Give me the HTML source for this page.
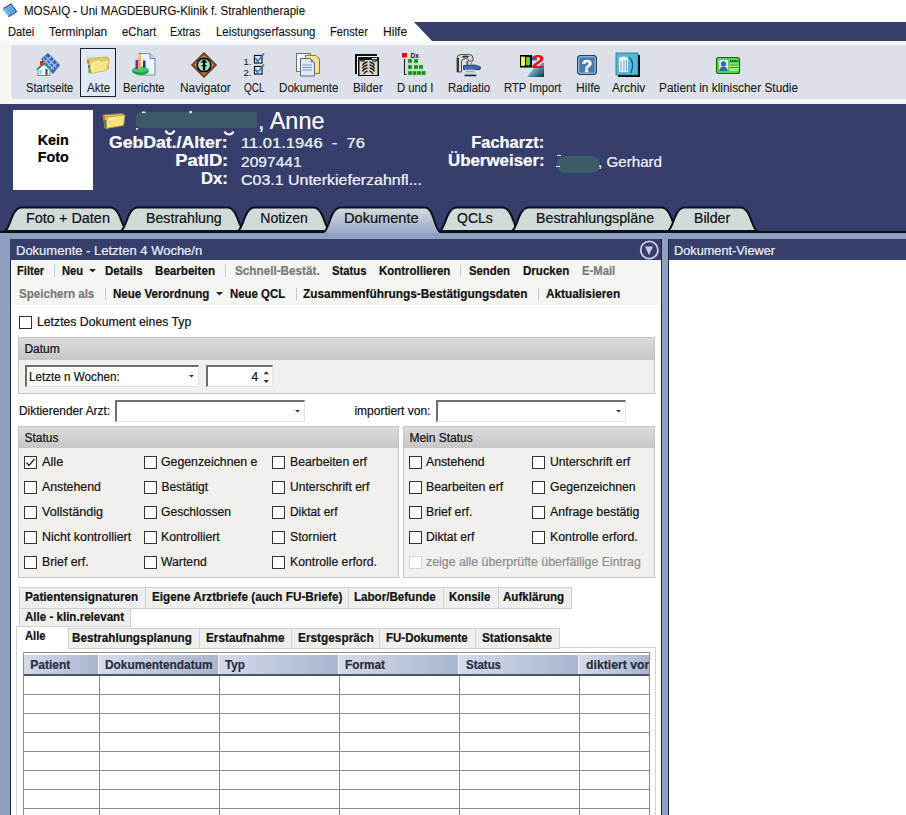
<!DOCTYPE html>
<html><head><meta charset="utf-8"><style>

html,body{margin:0;padding:0;}
body{width:906px;height:815px;overflow:hidden;position:relative;background:#fff;font-family:'Liberation Sans',sans-serif;}
body>div{position:absolute;}
.t{white-space:pre;-webkit-text-stroke:0.2px currentColor;}
svg{position:absolute;}

</style></head><body>
<svg style="left:0;top:0" width="20" height="20" viewBox="0 0 20 20"><polygon points="11,4 16.5,11.5 8.5,16.8 2.5,9.2" fill="#78c4ea"/><polyline points="3.5,8.5 11,4 16.5,11.5 8.5,16.8" fill="none" stroke="#3050a0" stroke-width="1.3"/><path d="M5,10.5 L11,6.5 M6.5,12.5 L12.5,8.5 M8,14.5 L14,10.5 M7,7.5 L11.5,14 M9.5,6 L14,12.5" stroke="#4a8ac8" stroke-width="0.8"/></svg>
<div class="t" style="left:23.70px;top:4.74px;font-size:12px;line-height:12px;color:#101010;transform:scaleX(0.960);transform-origin:left center;-webkit-text-stroke:0.1px currentColor;">MOSAIQ - Uni MAGDEBURG-Klinik f. Strahlentherapie</div>
<div class="t" style="left:7.50px;top:25.74px;font-size:12px;line-height:12px;color:#101010;transform:scaleX(0.935);transform-origin:left center;-webkit-text-stroke:0.1px currentColor;">Datei</div>
<div class="t" style="left:48.60px;top:25.74px;font-size:12px;line-height:12px;color:#101010;transform:scaleX(0.990);transform-origin:left center;-webkit-text-stroke:0.1px currentColor;">Terminplan</div>
<div class="t" style="left:121.70px;top:25.74px;font-size:12px;line-height:12px;color:#101010;transform:scaleX(0.949);transform-origin:left center;-webkit-text-stroke:0.1px currentColor;">eChart</div>
<div class="t" style="left:170.40px;top:25.74px;font-size:12px;line-height:12px;color:#101010;transform:scaleX(0.894);transform-origin:left center;-webkit-text-stroke:0.1px currentColor;">Extras</div>
<div class="t" style="left:215.70px;top:25.74px;font-size:12px;line-height:12px;color:#101010;transform:scaleX(0.955);transform-origin:left center;-webkit-text-stroke:0.1px currentColor;">Leistungserfassung</div>
<div class="t" style="left:330.30px;top:25.74px;font-size:12px;line-height:12px;color:#101010;transform:scaleX(0.931);transform-origin:left center;-webkit-text-stroke:0.1px currentColor;">Fenster</div>
<div class="t" style="left:382.60px;top:25.74px;font-size:12px;line-height:12px;color:#101010;transform:scaleX(1.008);transform-origin:left center;-webkit-text-stroke:0.1px currentColor;">Hilfe</div>
<svg style="left:0;top:0" width="906" height="45"><polygon points="414,22 906,22 906,41 432,41" fill="#363f6b"/></svg>
<div style="left:0px;top:41px;width:906px;height:63px;background:#f6f6f7;"></div>
<div style="left:11px;top:45px;width:895px;height:54px;background:#dce0e8;border-radius:3px 0 0 3px;"></div>
<div style="left:80px;top:48px;width:34px;height:47px;background:#dfe8f3;border:1px solid #1c2030;"></div>
<div class="t" style="left:25.50px;top:81.94px;font-size:12px;line-height:12px;color:#1a1a1a;transform:scaleX(0.933);transform-origin:left center;-webkit-text-stroke:0.1px currentColor;">Startseite</div>
<div class="t" style="left:86.80px;top:81.94px;font-size:12px;line-height:12px;color:#1a1a1a;transform:scaleX(0.966);transform-origin:left center;-webkit-text-stroke:0.1px currentColor;">Akte</div>
<div class="t" style="left:122.90px;top:81.94px;font-size:12px;line-height:12px;color:#1a1a1a;transform:scaleX(0.947);transform-origin:left center;-webkit-text-stroke:0.1px currentColor;">Berichte</div>
<div class="t" style="left:179.50px;top:81.94px;font-size:12px;line-height:12px;color:#1a1a1a;transform:scaleX(0.987);transform-origin:left center;-webkit-text-stroke:0.1px currentColor;">Navigator</div>
<div class="t" style="left:243.50px;top:81.94px;font-size:12px;line-height:12px;color:#1a1a1a;transform:scaleX(0.830);transform-origin:left center;-webkit-text-stroke:0.1px currentColor;">QCL</div>
<div class="t" style="left:279.00px;top:81.94px;font-size:12px;line-height:12px;color:#1a1a1a;transform:scaleX(0.969);transform-origin:left center;-webkit-text-stroke:0.1px currentColor;">Dokumente</div>
<div class="t" style="left:352.50px;top:81.94px;font-size:12px;line-height:12px;color:#1a1a1a;transform:scaleX(0.971);transform-origin:left center;-webkit-text-stroke:0.1px currentColor;">Bilder</div>
<div class="t" style="left:397.00px;top:81.94px;font-size:12px;line-height:12px;color:#1a1a1a;transform:scaleX(0.938);transform-origin:left center;-webkit-text-stroke:0.1px currentColor;">D und I</div>
<div class="t" style="left:447.50px;top:81.94px;font-size:12px;line-height:12px;color:#1a1a1a;transform:scaleX(0.958);transform-origin:left center;-webkit-text-stroke:0.1px currentColor;">Radiatio</div>
<div class="t" style="left:503.60px;top:81.94px;font-size:12px;line-height:12px;color:#1a1a1a;transform:scaleX(0.939);transform-origin:left center;-webkit-text-stroke:0.1px currentColor;">RTP Import</div>
<div class="t" style="left:575.70px;top:81.94px;font-size:12px;line-height:12px;color:#1a1a1a;transform:scaleX(1.012);transform-origin:left center;-webkit-text-stroke:0.1px currentColor;">Hilfe</div>
<div class="t" style="left:612.00px;top:81.94px;font-size:12px;line-height:12px;color:#1a1a1a;-webkit-text-stroke:0.1px currentColor;">Archiv</div>
<div class="t" style="left:659.10px;top:81.94px;font-size:12px;line-height:12px;color:#1a1a1a;transform:scaleX(0.988);transform-origin:left center;-webkit-text-stroke:0.1px currentColor;">Patient in klinischer Studie</div>
<svg style="left:0;top:0" width="906" height="104"><g transform="translate(32,48)"><polygon points="9,11 16,5 28,17 21,26" fill="#3a62b0"/><path d="M11,10.5 L22,21.5 M13.5,8.5 L24.5,19.5 M12.5,15 L19,8.5 M15.5,18 L22,11.5 M18.5,21.5 L25,15" stroke="#9cc4ee" stroke-width="1.2"/><polygon points="4,21 12,14 19,21 17,22 12,17 6,22" fill="#20b040"/><rect x="8" y="13" width="3.5" height="4" fill="#d03018"/><polygon points="6,21.5 12,16.5 18,21.5 18,27.5 6,27.5" fill="#f4f8ff" stroke="#5a70a8" stroke-width="0.9"/><rect x="13.5" y="21" width="2" height="6" fill="#40486a"/><rect x="7.5" y="22" width="2.5" height="4" fill="#a8c8f0"/></g><g transform="translate(82,48)"><polygon points="5.5,10.5 26,9 26.5,20.5 8,25" fill="#e8cc58" stroke="#c0a040" stroke-width="0.7"/><polygon points="9.5,14.5 27.5,11.5 24.5,22.5 8.5,25.5" fill="#f6e68a" stroke="#c8a848" stroke-width="0.7"/><path d="M10,15 L18,13 M10,15 L9.5,23" stroke="#fffbe8" stroke-width="1.1" fill="none"/><rect x="5" y="12" width="2.2" height="3.5" fill="#e07828"/><rect x="6" y="17" width="2" height="3.5" fill="#7868b0"/><rect x="6.5" y="21.5" width="2.2" height="3.5" fill="#38a838"/></g><g transform="translate(127,48)"><path d="M11.5,5.5 L23,5.5 L28,10.5 L28,27 L11.5,27 Z" fill="#eef4fc" stroke="#7888a8" stroke-width="1"/><path d="M23,5.5 L23,10.5 L28,10.5" fill="#c8d8ee" stroke="#7888a8" stroke-width="1"/><ellipse cx="13.5" cy="23" rx="8.5" ry="4" fill="#18a040"/><ellipse cx="13.5" cy="21.5" rx="8" ry="3" fill="#40c868"/><rect x="8.5" y="12" width="2.5" height="9" fill="#7030a0"/><rect x="11" y="6" width="2.8" height="15" fill="#f0a060"/><rect x="11" y="6" width="1.5" height="4" fill="#f0e080"/><rect x="16" y="12.5" width="2.5" height="7" fill="#203090"/></g><g transform="translate(188,48)"><polygon points="16,4.5 28.5,17 16,29.5 3.5,17" fill="#8a4a20" stroke="#402010" stroke-width="1" stroke-linejoin="round"/><polygon points="16,7 26,17 16,27 6,17" fill="#d08a50"/><circle cx="16" cy="17" r="7.6" fill="#000"/><circle cx="16" cy="17" r="6" fill="#98e8c0"/><polygon points="16,11 19.5,14.5 12.5,14.5" fill="#000"/><rect x="15" y="13.5" width="2.2" height="9" fill="#000"/><rect x="13.5" y="17" width="5" height="1.3" fill="#000"/></g><g transform="translate(238,48)"><text x="5.5" y="16.5" font-family="Liberation Sans" font-size="9.5" fill="#111">1.</text><text x="5.5" y="27.5" font-family="Liberation Sans" font-size="9.5" fill="#111">2.</text><rect x="16.5" y="7.5" width="7.5" height="7.5" fill="#f0f6ff" stroke="#111" stroke-width="1.2"/><rect x="16.5" y="18.5" width="7.5" height="7.5" fill="#f0f6ff" stroke="#111" stroke-width="1.2"/><polyline points="17.5,10 19.5,13.5 26,5.5" fill="none" stroke="#3a7ab0" stroke-width="1.8"/><polyline points="17.5,21 19.5,24.5 26,16.5" fill="none" stroke="#3a7ab0" stroke-width="1.8"/></g><g transform="translate(292,48)"><rect x="4.5" y="5.5" width="14" height="18" fill="#f8f8ff" stroke="#6a7088" stroke-width="1"/><path d="M13.5,7.5 L24,7.5 L27.5,11 L27.5,25.5 L13.5,25.5 Z" fill="#f8e490" stroke="#a07020" stroke-width="1"/><path d="M8.5,10.5 L18.5,10.5 L22.5,14.5 L22.5,28 L8.5,28 Z" fill="#dcecfc" stroke="#5a6890" stroke-width="1"/><path d="M18.5,10.5 L18.5,14.5 L22.5,14.5 Z" fill="#7090d0"/><path d="M10.5,17 H20 M10.5,19.5 H20 M10.5,22 H20" stroke="#6a8ad0" stroke-width="0.9"/></g><g transform="translate(350,48)"><rect x="5" y="6" width="22" height="20" fill="#111"/><rect x="7" y="8" width="22" height="20" fill="#fff"/><rect x="8" y="9" width="21" height="19" fill="#111"/><rect x="9.5" y="12" width="18" height="15" fill="#d8d4c6"/><path d="M10,12 Q13,14 15,12.5 M22,12.5 Q25,14 27.5,12" stroke="#222" stroke-width="1.2" fill="none"/><path d="M17.5,14 Q14,14.5 12.5,17.5 M17.5,17 Q14,17.5 12.5,20.5 M17.5,20 Q14,20.5 12.5,23.5 M17.5,23 Q15,23.5 14,26" stroke="#1a1a1a" stroke-width="1.3" fill="none"/><path d="M19.5,14 Q23,14.5 24.5,17.5 M19.5,17 Q23,17.5 24.5,20.5 M19.5,20 Q23,20.5 24.5,23.5 M19.5,23 Q22,23.5 23,26" stroke="#1a1a1a" stroke-width="1.3" fill="none"/><rect x="22" y="10" width="5" height="1.2" fill="#fff"/></g><g transform="translate(398,48)"><rect x="4" y="5" width="5" height="4.5" fill="#e01010"/><text x="12.5" y="10" font-family="Liberation Sans" font-size="6.5" font-weight="bold" fill="#111">Dx</text><path d="M6.5,11 V26.5 H8.5" fill="none" stroke="#203020" stroke-width="1.2"/><rect x="10" y="11" width="4" height="4" fill="#108a18" stroke="#80e080" stroke-width="0.5"/><rect x="16" y="11" width="4" height="4" fill="#108a18" stroke="#80e080" stroke-width="0.5"/><rect x="10" y="17" width="4" height="4" fill="#108a18" stroke="#80e080" stroke-width="0.5"/><rect x="16" y="17" width="4" height="4" fill="#108a18" stroke="#80e080" stroke-width="0.5"/><rect x="21" y="17" width="4" height="4" fill="#108a18" stroke="#80e080" stroke-width="0.5"/><rect x="10" y="23" width="4" height="4" fill="#108a18" stroke="#80e080" stroke-width="0.5"/><rect x="14.5" y="23" width="4" height="4" fill="#108a18" stroke="#80e080" stroke-width="0.5"/><rect x="19" y="23" width="4" height="4" fill="#108a18" stroke="#80e080" stroke-width="0.5"/><rect x="23.5" y="23" width="4" height="4" fill="#108a18" stroke="#80e080" stroke-width="0.5"/></g><g transform="translate(452,48)"><path d="M5,24 L5,10 Q5,6.5 9,6.5 L17,6.5 Q21,6.5 21,10 L21,13 L17,13 Q16.5,10.5 13,10.5 Q9.5,10.5 9.5,14 L9.5,24 Z" fill="#d8d4d0" stroke="#505050" stroke-width="1"/><rect x="5" y="10" width="2" height="14" fill="#3a3a3a"/><path d="M10.5,9 Q13.5,7.8 16.5,9" stroke="#303030" stroke-width="1.6" fill="none"/><rect x="14.5" y="13" width="1.8" height="5" fill="#904848"/><rect x="18.5" y="12" width="1.5" height="5" fill="#a0a0a0"/><path d="M11.5,17.5 L23,17 L28.5,19 L28,21.5 L11.5,21.5 Z" fill="#3a6ab8" stroke="#142850" stroke-width="0.8"/><rect x="13" y="21.5" width="10" height="5.5" fill="#c0d4dc"/><path d="M12.5,27.5 H24.5" stroke="#142850" stroke-width="1.6"/><path d="M13.5,23.5 H22" stroke="#c8b060" stroke-width="1"/></g><g transform="translate(516,48)"><defs><linearGradient id="rtpg" x1="0" y1="0" x2="1" y2="1"><stop offset="0" stop-color="#c8f0fa"/><stop offset="0.45" stop-color="#6ab0d8"/><stop offset="1" stop-color="#182848"/></linearGradient></defs><polygon points="11,29 28,29 28,14 18,20" fill="url(#rtpg)"/><rect x="4" y="7" width="12" height="12.5" fill="#000"/><rect x="5" y="8.5" width="4" height="9.5" rx="1" fill="#f0f060"/><rect x="10" y="9" width="4" height="8.5" rx="1" fill="#50d850"/><rect x="16" y="8.5" width="5" height="4" fill="#4060c0"/><text x="0" y="0" transform="translate(15.5,19.5) scale(1.25,1)" font-family="Liberation Sans" font-size="19" font-weight="bold" fill="#e81010">2</text></g><g transform="translate(572,48)"><rect x="5.5" y="7.5" width="19" height="19" rx="2.5" fill="#4a78a8" stroke="#2a4060" stroke-width="1"/><rect x="6.8" y="8.8" width="16.4" height="16.4" rx="1.8" fill="none" stroke="#c0dcf0" stroke-width="0.8"/><text x="15" y="23.5" text-anchor="middle" font-family="Liberation Sans" font-size="17" font-weight="bold" fill="#fff" stroke="#fff" stroke-width="0.5">?</text></g><g transform="translate(612,48)"><rect x="6" y="7" width="22" height="22" fill="#000"/><rect x="4" y="5" width="22" height="22" fill="#58b8d8"/><rect x="4" y="5" width="22" height="22" fill="none" stroke="#306888" stroke-width="0.8"/><path d="M7,10 Q12,7 16,10 L16,24 L7,24 Z" fill="#e8f4fa"/><path d="M9,13 V23 M12,12 V23 M14.5,12 V23" stroke="#7aa0b0" stroke-width="1"/><path d="M17,9 Q23,14 19,25" fill="none" stroke="#205070" stroke-width="1.2"/></g><g transform="translate(712,48)"><rect x="4.5" y="9.5" width="23" height="16" rx="2" fill="#58d058" stroke="#107010" stroke-width="1.2"/><rect x="7" y="12" width="9" height="11" fill="#d8f0f8"/><circle cx="11.5" cy="15.8" r="2.6" fill="#3a68b0"/><path d="M7.2,23 Q7.5,18.5 11.5,18.5 Q15.5,18.5 15.8,23 Z" fill="#3a68b0"/><path d="M18,13 H26" stroke="#111" stroke-width="1.6" stroke-dasharray="1.3,0.9"/><rect x="17.5" y="15.5" width="9" height="7.5" fill="#a8f070"/><path d="M18,17 H26 M18,19.5 H26" stroke="#208020" stroke-width="0.8"/></g></svg>
<div style="left:0px;top:104px;width:906px;height:135px;background:#363f6b;"></div>
<div style="left:13px;top:110px;width:80px;height:80px;background:#fff;"></div>
<div class="t" style="left:37.83px;top:132.65px;font-size:14px;line-height:14px;color:#000;font-weight:bold;transform:scaleX(1.022);transform-origin:center center;">Kein</div>
<div class="t" style="left:37.84px;top:149.85px;font-size:14px;line-height:14px;color:#000;font-weight:bold;transform:scaleX(1.022);transform-origin:center center;">Foto</div>
<div style="left:135.8px;top:112.2px;width:121px;height:16px;background:#3b5b69;border-radius:5px 2px 2px 5px;"></div>
<svg style="left:130px;top:108px" width="140" height="30"><path d="M35.5,22.5 Q37,26 40,26 Q43,26 44.5,22.5" fill="none" stroke="#fff" stroke-width="2"/><path d="M94.5,23.5 Q96,26.5 99,26.5 Q102,26.5 103.5,23.5" fill="none" stroke="#fff" stroke-width="2"/><rect x="12" y="3.6" width="3.5" height="1.4" fill="#fff"/><rect x="59.5" y="3" width="2.2" height="2.2" fill="#fff"/><rect x="6" y="20" width="2" height="1.6" fill="#fff"/></svg>
<svg style="left:101px;top:112px" width="26" height="18" viewBox="0 0 26 18"><polygon points="2,3 22,1.5 23,12 4,16" fill="#e0c050" stroke="#a88a30" stroke-width="0.8"/><polygon points="6,5 24,3 22.5,13.5 5,16.5" fill="#f6e27a" stroke="#b89a38" stroke-width="0.8"/><path d="M7,8 L14,5.5" stroke="#fff8d8" stroke-width="1.2"/><rect x="2" y="4" width="2" height="4" fill="#e07020"/><rect x="3" y="8" width="2" height="4" fill="#7060a0"/><rect x="3.5" y="12" width="2" height="4" fill="#30a030"/></svg>
<div class="t" style="left:257.50px;top:109.83px;font-size:23px;line-height:23px;color:#fff;transform:scaleX(1.019);transform-origin:left center;">, Anne</div>
<div class="t" style="left:120.42px;top:134.96px;font-size:16px;line-height:16px;color:#fff;font-weight:bold;transform:scaleX(1.103);transform-origin:right center;">GebDat./Alter:</div>
<div class="t" style="left:181.77px;top:152.76px;font-size:16px;line-height:16px;color:#fff;font-weight:bold;transform:scaleX(1.146);transform-origin:right center;">PatID:</div>
<div class="t" style="left:202.22px;top:171.36px;font-size:16px;line-height:16px;color:#fff;font-weight:bold;transform:scaleX(1.040);transform-origin:right center;">Dx:</div>
<div class="t" style="left:241.00px;top:136.25px;font-size:14px;line-height:14px;color:#f4f4f8;transform:scaleX(1.183);transform-origin:left center;">11.01.1946  -  76</div>
<div class="t" style="left:241.00px;top:154.55px;font-size:14px;line-height:14px;color:#f4f4f8;transform:scaleX(1.113);transform-origin:left center;">2097441</div>
<div class="t" style="left:241.00px;top:173.35px;font-size:14px;line-height:14px;color:#f4f4f8;transform:scaleX(1.140);transform-origin:left center;">C03.1 Unterkieferzahnfl...</div>
<div class="t" style="left:473.48px;top:134.76px;font-size:16px;line-height:16px;color:#fff;font-weight:bold;transform:scaleX(1.024);transform-origin:right center;">Facharzt:</div>
<div class="t" style="left:453.01px;top:153.36px;font-size:16px;line-height:16px;color:#fff;font-weight:bold;transform:scaleX(1.055);transform-origin:right center;">Überweiser:</div>
<div style="left:556.7px;top:155.9px;width:43px;height:17.3px;background:#3b5b69;border-radius:8px;"></div>
<div style="left:557px;top:155px;width:4px;height:1.4px;background:#fff;"></div>
<div style="left:556px;top:166px;width:4px;height:1.4px;background:#fff;"></div>
<div class="t" style="left:598.40px;top:154.30px;font-size:15px;line-height:15px;color:#f4f4f8;transform:scaleX(1.011);transform-origin:left center;">, Gerhard</div>
<div style="left:0px;top:231px;width:906px;height:2px;background:#0d0f1a;"></div>
<div style="left:0px;top:233px;width:906px;height:6px;background:#90a0c0;"></div>
<svg style="left:0;top:200px" width="906" height="40" viewBox="0 200 906 40"><defs><linearGradient id="ga" x1="0" y1="0" x2="0" y2="1"><stop offset="0" stop-color="#d2dcdc"/><stop offset="1" stop-color="#9aaac8"/></linearGradient></defs><path d="M5,231 C11,227 11,209 21,207.5 L111,207.5 C121,209 121,227 127,231 Z" fill="#cfdad9" stroke="#0d0f1a" stroke-width="2"/><path d="M121,231 C127,227 127,209 137,207.5 L228,207.5 C238,209 238,227 244,231 Z" fill="#cfdad9" stroke="#0d0f1a" stroke-width="2"/><path d="M238,231 C244,227 244,209 254,207.5 L314,207.5 C324,209 324,227 330,231 Z" fill="#cfdad9" stroke="#0d0f1a" stroke-width="2"/><path d="M440,231 C446,227 446,209 456,207.5 L503,207.5 C513,209 513,227 519,231 Z" fill="#cfdad9" stroke="#0d0f1a" stroke-width="2"/><path d="M512,231 C518,227 518,209 528,207.5 L662,207.5 C672,209 672,227 678,231 Z" fill="#cfdad9" stroke="#0d0f1a" stroke-width="2"/><path d="M668,231 C674,227 674,209 684,207.5 L741,207.5 C751,209 751,227 757,231 Z" fill="#cfdad9" stroke="#0d0f1a" stroke-width="2"/><path d="M324,233 C330,229 330,209 340,207.5 L426,207.5 C434,209 434,229 440,233 Z" fill="url(#ga)" stroke="none"/><path d="M324,232 C330,228 330,209 340,207.5 L426,207.5 C434,209 434,228 440,232" fill="none" stroke="#0d0f1a" stroke-width="2"/></svg>
<div class="t" style="left:25.60px;top:210.85px;font-size:14px;line-height:14px;color:#111;transform:scaleX(1.032);transform-origin:left center;">Foto + Daten</div>
<div class="t" style="left:145.60px;top:210.85px;font-size:14px;line-height:14px;color:#111;transform:scaleX(1.013);transform-origin:left center;">Bestrahlung</div>
<div class="t" style="left:260.30px;top:210.85px;font-size:14px;line-height:14px;color:#111;">Notizen</div>
<div class="t" style="left:457.00px;top:210.85px;font-size:14px;line-height:14px;color:#111;">QCLs</div>
<div class="t" style="left:535.50px;top:210.85px;font-size:14px;line-height:14px;color:#111;transform:scaleX(1.018);transform-origin:left center;">Bestrahlungspläne</div>
<div class="t" style="left:694.00px;top:210.85px;font-size:14px;line-height:14px;color:#111;transform:scaleX(1.011);transform-origin:left center;">Bilder</div>
<div class="t" style="left:344.40px;top:210.85px;font-size:14px;line-height:14px;color:#111;transform:scaleX(1.043);transform-origin:left center;">Dokumente</div>
<div style="left:0px;top:239px;width:906px;height:576px;background:#90a0c0;"></div>
<div style="left:10px;top:239px;width:652px;height:576px;background:#1c2342;"></div>
<div style="left:10px;top:239px;width:651px;height:21px;background:#363f6b;border-radius:0 3px 0 0;"></div>
<div style="left:11px;top:260px;width:650px;height:555px;background:#fff;"></div>
<div class="t" style="left:16.00px;top:243.90px;font-size:13px;line-height:13px;color:#f0f0f8;">Dokumente - Letzten 4 Woche/n</div>
<svg style="left:638px;top:240px" width="22" height="21" viewBox="0 0 22 21"><circle cx="11.3" cy="10" r="8.6" fill="none" stroke="#c9cde3" stroke-width="1.8"/><polygon points="7,6.6 15,6.6 11,15.2" fill="#c9cde3"/></svg>
<div style="left:668px;top:239px;width:238px;height:576px;background:#1c2342;"></div>
<div style="left:669px;top:239px;width:237px;height:21px;background:#363f6b;"></div>
<div style="left:669px;top:260px;width:237px;height:555px;background:#fff;"></div>
<div class="t" style="left:674.00px;top:243.90px;font-size:13px;line-height:13px;color:#f0f0f8;transform:scaleX(0.980);transform-origin:left center;">Dokument-Viewer</div>
<div style="left:11px;top:260px;width:648px;height:44.5px;background:#f5f5f3;"></div>
<div class="t" style="left:17.30px;top:264.64px;font-size:12px;line-height:12px;color:#111;font-weight:bold;transform:scaleX(0.927);transform-origin:left center;">Filter</div>
<div style="left:54px;top:265px;width:1px;height:12px;background:#c8c8c8;"></div>
<div class="t" style="left:62.20px;top:264.64px;font-size:12px;line-height:12px;color:#111;font-weight:bold;transform:scaleX(0.931);transform-origin:left center;">Neu</div>
<svg style="left:88.5px;top:268.5px" width="7" height="4"><polygon points="0,0 7,0 3.5,3.5" fill="#222"/></svg>
<div class="t" style="left:104.70px;top:264.64px;font-size:12px;line-height:12px;color:#111;font-weight:bold;transform:scaleX(0.955);transform-origin:left center;">Details</div>
<div class="t" style="left:155.20px;top:264.64px;font-size:12px;line-height:12px;color:#111;font-weight:bold;transform:scaleX(0.967);transform-origin:left center;">Bearbeiten</div>
<div style="left:225px;top:265px;width:1px;height:12px;background:#c8c8c8;"></div>
<div class="t" style="left:234.60px;top:264.64px;font-size:12px;line-height:12px;color:#7a7a7a;font-weight:bold;transform:scaleX(0.977);transform-origin:left center;">Schnell-Bestät.</div>
<div class="t" style="left:331.60px;top:264.64px;font-size:12px;line-height:12px;color:#111;font-weight:bold;transform:scaleX(0.938);transform-origin:left center;">Status</div>
<div class="t" style="left:378.50px;top:264.64px;font-size:12px;line-height:12px;color:#111;font-weight:bold;transform:scaleX(0.955);transform-origin:left center;">Kontrollieren</div>
<div style="left:460px;top:265px;width:1px;height:12px;background:#c8c8c8;"></div>
<div class="t" style="left:469.40px;top:264.64px;font-size:12px;line-height:12px;color:#111;font-weight:bold;transform:scaleX(0.944);transform-origin:left center;">Senden</div>
<div class="t" style="left:522.90px;top:264.64px;font-size:12px;line-height:12px;color:#111;font-weight:bold;transform:scaleX(0.964);transform-origin:left center;">Drucken</div>
<div class="t" style="left:581.60px;top:264.64px;font-size:12px;line-height:12px;color:#7a7a7a;font-weight:bold;transform:scaleX(0.939);transform-origin:left center;">E-Mail</div>
<div class="t" style="left:18.70px;top:287.64px;font-size:12px;line-height:12px;color:#7a7a7a;font-weight:bold;transform:scaleX(0.965);transform-origin:left center;">Speichern als</div>
<div style="left:105px;top:288px;width:1px;height:12px;background:#c8c8c8;"></div>
<div class="t" style="left:112.70px;top:287.64px;font-size:12px;line-height:12px;color:#111;font-weight:bold;transform:scaleX(0.964);transform-origin:left center;">Neue Verordnung</div>
<svg style="left:215.5px;top:291.5px" width="7" height="4"><polygon points="0,0 7,0 3.5,3.5" fill="#222"/></svg>
<div class="t" style="left:230.30px;top:287.64px;font-size:12px;line-height:12px;color:#111;font-weight:bold;transform:scaleX(0.950);transform-origin:left center;">Neue QCL</div>
<div style="left:295.5px;top:288px;width:1px;height:12px;background:#c8c8c8;"></div>
<div class="t" style="left:303.40px;top:287.64px;font-size:12px;line-height:12px;color:#111;font-weight:bold;transform:scaleX(0.987);transform-origin:left center;">Zusammenführungs-Bestätigungsdaten</div>
<div style="left:538.4px;top:288px;width:1px;height:12px;background:#c8c8c8;"></div>
<div class="t" style="left:546.30px;top:287.64px;font-size:12px;line-height:12px;color:#111;font-weight:bold;transform:scaleX(0.983);transform-origin:left center;">Aktualisieren</div>
<div style="left:19px;top:316px;width:11px;height:11px;background:#fff;border:1px solid #333;"></div>
<div class="t" style="left:36.60px;top:315.84px;font-size:12px;line-height:12px;color:#111;transform:scaleX(1.020);transform-origin:left center;">Letztes Dokument eines Typ</div>
<div style="left:18px;top:337px;width:635px;height:55px;background:#f1f0ec;border:1px solid #c4c4c4;"></div>
<div style="left:19px;top:338px;width:635px;height:22px;background:linear-gradient(#dcdcdc,#c6c6c6);"></div>
<div class="t" style="left:24.40px;top:343.14px;font-size:12px;line-height:12px;color:#111;">Datum</div>
<div style="left:25px;top:365px;width:171px;height:19px;background:#fff;border-style:solid;border-width:2px 1px 1px 2px;border-color:#6e6e6e #e4e4e4 #e4e4e4 #6e6e6e;"></div>
<svg style="left:188.5px;top:374.5px" width="5" height="4"><polygon points="0,0 5,0 2.5,2.5" fill="#333"/></svg>
<div class="t" style="left:29.00px;top:370.54px;font-size:12px;line-height:12px;color:#111;transform:scaleX(0.973);transform-origin:left center;">Letzte n Wochen:</div>
<div style="left:206px;top:365px;width:64px;height:19px;background:#fff;border-style:solid;border-width:2px 1px 1px 2px;border-color:#6e6e6e #e4e4e4 #e4e4e4 #6e6e6e;"></div>
<div class="t" style="left:251.50px;top:370.84px;font-size:12px;line-height:12px;color:#111;">4</div>
<svg style="left:262px;top:368px" width="10" height="16"><polygon points="1.5,6.2 7,6.2 4.25,3.2" fill="#333"/><polygon points="1.5,12 7,12 4.25,15" fill="#333"/></svg>
<div class="t" style="left:19.30px;top:404.84px;font-size:12px;line-height:12px;color:#111;transform:scaleX(0.990);transform-origin:left center;">Diktierender Arzt:</div>
<div style="left:115px;top:400px;width:187px;height:19px;background:#fff;border-style:solid;border-width:2px 1px 1px 2px;border-color:#6e6e6e #e4e4e4 #e4e4e4 #6e6e6e;"></div>
<svg style="left:294.5px;top:409.5px" width="5" height="4"><polygon points="0,0 5,0 2.5,2.5" fill="#333"/></svg>
<div class="t" style="left:354.40px;top:404.84px;font-size:12px;line-height:12px;color:#111;">importiert von:</div>
<div style="left:436px;top:400px;width:187px;height:19px;background:#fff;border-style:solid;border-width:2px 1px 1px 2px;border-color:#6e6e6e #e4e4e4 #e4e4e4 #6e6e6e;"></div>
<svg style="left:615.5px;top:409.5px" width="5" height="4"><polygon points="0,0 5,0 2.5,2.5" fill="#333"/></svg>
<div style="left:18px;top:426px;width:379px;height:150px;background:#f1f0ec;border:1px solid #c4c4c4;"></div>
<div style="left:19px;top:427px;width:379px;height:21px;background:linear-gradient(#dcdcdc,#c6c6c6);"></div>
<div class="t" style="left:24.40px;top:432.14px;font-size:12px;line-height:12px;color:#111;">Status</div>
<div style="left:403px;top:426px;width:250px;height:150px;background:#f1f0ec;border:1px solid #c4c4c4;"></div>
<div style="left:404px;top:427px;width:250px;height:21px;background:linear-gradient(#dcdcdc,#c6c6c6);"></div>
<div class="t" style="left:409.40px;top:432.14px;font-size:12px;line-height:12px;color:#111;">Mein Status</div>
<div style="left:23.7px;top:455.7px;width:11px;height:11px;background:#fff;border:1px solid #333;"></div>
<svg style="left:23.7px;top:455.7px" width="13" height="13"><polyline points="2.5,6.5 5,9.5 10.5,3" fill="none" stroke="#222" stroke-width="1.3"/></svg>
<div class="t" style="left:41.50px;top:455.64px;font-size:12px;line-height:12px;color:#111;transform:scaleX(1.064);transform-origin:left center;">Alle</div>
<div style="left:143.7px;top:455.7px;width:11px;height:11px;background:#fff;border:1px solid #333;"></div>
<div class="t" style="left:161.40px;top:455.64px;font-size:12px;line-height:12px;color:#111;transform:scaleX(1.025);transform-origin:left center;">Gegenzeichnen e</div>
<div style="left:272.2px;top:455.7px;width:11px;height:11px;background:#fff;border:1px solid #333;"></div>
<div class="t" style="left:289.60px;top:455.64px;font-size:12px;line-height:12px;color:#111;transform:scaleX(1.020);transform-origin:left center;">Bearbeiten erf</div>
<div style="left:23.7px;top:480.7px;width:11px;height:11px;background:#fff;border:1px solid #333;"></div>
<div class="t" style="left:41.50px;top:480.64px;font-size:12px;line-height:12px;color:#111;transform:scaleX(1.025);transform-origin:left center;">Anstehend</div>
<div style="left:143.7px;top:480.7px;width:11px;height:11px;background:#fff;border:1px solid #333;"></div>
<div class="t" style="left:161.40px;top:480.64px;font-size:12px;line-height:12px;color:#111;">Bestätigt</div>
<div style="left:272.2px;top:480.7px;width:11px;height:11px;background:#fff;border:1px solid #333;"></div>
<div class="t" style="left:289.60px;top:480.64px;font-size:12px;line-height:12px;color:#111;transform:scaleX(1.007);transform-origin:left center;">Unterschrift erf</div>
<div style="left:23.7px;top:505.7px;width:11px;height:11px;background:#fff;border:1px solid #333;"></div>
<div class="t" style="left:41.50px;top:505.64px;font-size:12px;line-height:12px;color:#111;transform:scaleX(1.051);transform-origin:left center;">Vollständig</div>
<div style="left:143.7px;top:505.7px;width:11px;height:11px;background:#fff;border:1px solid #333;"></div>
<div class="t" style="left:161.40px;top:505.64px;font-size:12px;line-height:12px;color:#111;transform:scaleX(1.009);transform-origin:left center;">Geschlossen</div>
<div style="left:272.2px;top:505.7px;width:11px;height:11px;background:#fff;border:1px solid #333;"></div>
<div class="t" style="left:289.60px;top:505.64px;font-size:12px;line-height:12px;color:#111;transform:scaleX(0.989);transform-origin:left center;">Diktat erf</div>
<div style="left:23.7px;top:530.7px;width:11px;height:11px;background:#fff;border:1px solid #333;"></div>
<div class="t" style="left:41.50px;top:530.64px;font-size:12px;line-height:12px;color:#111;transform:scaleX(1.037);transform-origin:left center;">Nicht kontrolliert</div>
<div style="left:143.7px;top:530.7px;width:11px;height:11px;background:#fff;border:1px solid #333;"></div>
<div class="t" style="left:161.40px;top:530.64px;font-size:12px;line-height:12px;color:#111;transform:scaleX(1.025);transform-origin:left center;">Kontrolliert</div>
<div style="left:272.2px;top:530.7px;width:11px;height:11px;background:#fff;border:1px solid #333;"></div>
<div class="t" style="left:289.60px;top:530.64px;font-size:12px;line-height:12px;color:#111;transform:scaleX(1.019);transform-origin:left center;">Storniert</div>
<div style="left:23.7px;top:555.7px;width:11px;height:11px;background:#fff;border:1px solid #333;"></div>
<div class="t" style="left:41.50px;top:555.64px;font-size:12px;line-height:12px;color:#111;transform:scaleX(1.027);transform-origin:left center;">Brief erf.</div>
<div style="left:143.7px;top:555.7px;width:11px;height:11px;background:#fff;border:1px solid #333;"></div>
<div class="t" style="left:161.40px;top:555.64px;font-size:12px;line-height:12px;color:#111;transform:scaleX(1.018);transform-origin:left center;">Wartend</div>
<div style="left:272.2px;top:555.7px;width:11px;height:11px;background:#fff;border:1px solid #333;"></div>
<div class="t" style="left:289.60px;top:555.64px;font-size:12px;line-height:12px;color:#111;transform:scaleX(1.018);transform-origin:left center;">Kontrolle erford.</div>
<div style="left:408.7px;top:455.7px;width:11px;height:11px;background:#fff;border:1px solid #333;"></div>
<div class="t" style="left:426.00px;top:455.64px;font-size:12px;line-height:12px;color:#111;transform:scaleX(1.021);transform-origin:left center;">Anstehend</div>
<div style="left:532.2px;top:455.7px;width:11px;height:11px;background:#fff;border:1px solid #333;"></div>
<div class="t" style="left:550.40px;top:455.64px;font-size:12px;line-height:12px;color:#111;transform:scaleX(1.018);transform-origin:left center;">Unterschrift erf</div>
<div style="left:408.7px;top:480.7px;width:11px;height:11px;background:#fff;border:1px solid #333;"></div>
<div class="t" style="left:426.00px;top:480.64px;font-size:12px;line-height:12px;color:#111;transform:scaleX(1.024);transform-origin:left center;">Bearbeiten erf</div>
<div style="left:532.2px;top:480.7px;width:11px;height:11px;background:#fff;border:1px solid #333;"></div>
<div class="t" style="left:550.40px;top:480.64px;font-size:12px;line-height:12px;color:#111;transform:scaleX(1.018);transform-origin:left center;">Gegenzeichnen</div>
<div style="left:408.7px;top:505.7px;width:11px;height:11px;background:#fff;border:1px solid #333;"></div>
<div class="t" style="left:426.00px;top:505.64px;font-size:12px;line-height:12px;color:#111;transform:scaleX(1.021);transform-origin:left center;">Brief erf.</div>
<div style="left:532.2px;top:505.7px;width:11px;height:11px;background:#fff;border:1px solid #333;"></div>
<div class="t" style="left:550.40px;top:505.64px;font-size:12px;line-height:12px;color:#111;transform:scaleX(1.022);transform-origin:left center;">Anfrage bestätig</div>
<div style="left:408.7px;top:530.7px;width:11px;height:11px;background:#fff;border:1px solid #333;"></div>
<div class="t" style="left:426.00px;top:530.64px;font-size:12px;line-height:12px;color:#111;transform:scaleX(1.008);transform-origin:left center;">Diktat erf</div>
<div style="left:532.2px;top:530.7px;width:11px;height:11px;background:#fff;border:1px solid #333;"></div>
<div class="t" style="left:550.40px;top:530.64px;font-size:12px;line-height:12px;color:#111;transform:scaleX(1.028);transform-origin:left center;">Kontrolle erford.</div>
<div style="left:408.7px;top:555.7px;width:11px;height:11px;background:#fff;border:1px solid #d6d6d6;"></div>
<div class="t" style="left:426.00px;top:555.64px;font-size:12px;line-height:12px;color:#8c8c8c;transform:scaleX(1.029);transform-origin:left center;">zeige alle überprüfte überfällige Eintrag</div>
<div style="left:16px;top:647px;width:638px;height:170px;background:#fff;border:1px solid #d2d2d2;"></div>
<div style="left:18.5px;top:586.8px;width:125.5px;height:20.200000000000045px;background:#efefee;border:1px solid #cfcfcf;"></div>
<div class="t" style="left:24.70px;top:591.34px;font-size:12px;line-height:12px;color:#111;font-weight:bold;transform:scaleX(0.982);transform-origin:left center;">Patientensignaturen</div>
<div style="left:145px;top:586.8px;width:202px;height:20.200000000000045px;background:#efefee;border:1px solid #cfcfcf;"></div>
<div class="t" style="left:151.60px;top:591.34px;font-size:12px;line-height:12px;color:#111;font-weight:bold;transform:scaleX(0.977);transform-origin:left center;">Eigene Arztbriefe (auch FU-Briefe)</div>
<div style="left:348px;top:586.8px;width:94px;height:20.200000000000045px;background:#efefee;border:1px solid #cfcfcf;"></div>
<div class="t" style="left:354.40px;top:591.34px;font-size:12px;line-height:12px;color:#111;font-weight:bold;transform:scaleX(0.966);transform-origin:left center;">Labor/Befunde</div>
<div style="left:443px;top:586.8px;width:53.5px;height:20.200000000000045px;background:#efefee;border:1px solid #cfcfcf;"></div>
<div class="t" style="left:449.30px;top:591.34px;font-size:12px;line-height:12px;color:#111;font-weight:bold;transform:scaleX(0.953);transform-origin:left center;">Konsile</div>
<div style="left:497.5px;top:586.8px;width:72.5px;height:20.200000000000045px;background:#efefee;border:1px solid #cfcfcf;"></div>
<div class="t" style="left:503.40px;top:591.34px;font-size:12px;line-height:12px;color:#111;font-weight:bold;transform:scaleX(0.965);transform-origin:left center;">Aufklärung</div>
<div style="left:18.5px;top:607.5px;width:110.0px;height:17.5px;background:#efefee;border:1px solid #cfcfcf;"></div>
<div class="t" style="left:24.70px;top:611.34px;font-size:12px;line-height:12px;color:#111;font-weight:bold;transform:scaleX(0.964);transform-origin:left center;">Alle - klin.relevant</div>
<div style="left:67px;top:627.5px;width:130.5px;height:19.5px;background:#efefee;border:1px solid #cfcfcf;"></div>
<div class="t" style="left:72.30px;top:631.54px;font-size:12px;line-height:12px;color:#111;font-weight:bold;transform:scaleX(0.971);transform-origin:left center;">Bestrahlungsplanung</div>
<div style="left:198.5px;top:627.5px;width:91.0px;height:19.5px;background:#efefee;border:1px solid #cfcfcf;"></div>
<div class="t" style="left:205.70px;top:631.54px;font-size:12px;line-height:12px;color:#111;font-weight:bold;transform:scaleX(0.980);transform-origin:left center;">Erstaufnahme</div>
<div style="left:290.5px;top:627.5px;width:87.5px;height:19.5px;background:#efefee;border:1px solid #cfcfcf;"></div>
<div class="t" style="left:297.60px;top:631.54px;font-size:12px;line-height:12px;color:#111;font-weight:bold;transform:scaleX(0.986);transform-origin:left center;">Erstgespräch</div>
<div style="left:379px;top:627.5px;width:94.5px;height:19.5px;background:#efefee;border:1px solid #cfcfcf;"></div>
<div class="t" style="left:386.30px;top:631.54px;font-size:12px;line-height:12px;color:#111;font-weight:bold;transform:scaleX(0.958);transform-origin:left center;">FU-Dokumente</div>
<div style="left:474.5px;top:627.5px;width:83.0px;height:19.5px;background:#efefee;border:1px solid #cfcfcf;"></div>
<div class="t" style="left:482.00px;top:631.54px;font-size:12px;line-height:12px;color:#111;font-weight:bold;transform:scaleX(0.982);transform-origin:left center;">Stationsakte</div>
<div style="left:16px;top:625.5px;width:51px;height:23px;background:#fff;border:1px solid #d2d2d2;border-bottom:none;"></div>
<div class="t" style="left:24.50px;top:629.54px;font-size:12px;line-height:12px;color:#111;font-weight:bold;transform:scaleX(0.936);transform-origin:left center;">Alle</div>
<div style="left:23px;top:652px;width:625px;height:170px;background:#fff;border:1px solid #8e8e8e;"></div>
<div style="left:24px;top:655px;width:625px;height:19px;background:#b2bdd3;border-bottom:2px solid #5a6070;"></div>
<div style="left:24px;top:655px;width:74px;height:19px;background:linear-gradient(90deg,#d3daea,#a9b6cf);"></div>
<div style="left:98px;top:655px;width:2px;height:19px;background:#eef1f8;"></div>
<div style="left:99px;top:655px;width:119px;height:19px;background:linear-gradient(90deg,#d3daea,#a9b6cf);"></div>
<div style="left:218px;top:655px;width:2px;height:19px;background:#eef1f8;"></div>
<div style="left:219px;top:655px;width:119px;height:19px;background:linear-gradient(90deg,#d3daea,#a9b6cf);"></div>
<div style="left:338px;top:655px;width:2px;height:19px;background:#eef1f8;"></div>
<div style="left:339px;top:655px;width:119px;height:19px;background:linear-gradient(90deg,#d3daea,#a9b6cf);"></div>
<div style="left:458px;top:655px;width:2px;height:19px;background:#eef1f8;"></div>
<div style="left:459px;top:655px;width:119px;height:19px;background:linear-gradient(90deg,#d3daea,#a9b6cf);"></div>
<div style="left:578px;top:655px;width:2px;height:19px;background:#eef1f8;"></div>
<div style="left:579px;top:655px;width:70px;height:19px;background:linear-gradient(90deg,#d3daea,#a9b6cf);"></div>
<div class="t" style="left:30.30px;top:658.64px;font-size:12px;line-height:12px;color:#2a2e3a;font-weight:bold;">Patient</div>
<div class="t" style="left:105.00px;top:658.64px;font-size:12px;line-height:12px;color:#2a2e3a;font-weight:bold;transform:scaleX(0.989);transform-origin:left center;">Dokumentendatum</div>
<div class="t" style="left:225.00px;top:658.64px;font-size:12px;line-height:12px;color:#2a2e3a;font-weight:bold;transform:scaleX(0.978);transform-origin:left center;">Typ</div>
<div class="t" style="left:345.00px;top:658.64px;font-size:12px;line-height:12px;color:#2a2e3a;font-weight:bold;transform:scaleX(0.983);transform-origin:left center;">Format</div>
<div class="t" style="left:465.50px;top:658.64px;font-size:12px;line-height:12px;color:#2a2e3a;font-weight:bold;transform:scaleX(0.954);transform-origin:left center;">Status</div>
<div class="t" style="left:585.50px;top:658.64px;font-size:12px;line-height:12px;color:#2a2e3a;font-weight:bold;transform:scaleX(1.020);transform-origin:left center;">diktiert von</div>
<div style="left:650px;top:653px;width:5px;height:25px;background:#fff;"></div>
<div style="left:649px;top:652px;width:1px;height:170px;background:#8e8e8e;"></div>
<div style="left:24px;top:674px;width:625px;height:2px;background:#4e5566;"></div>
<div style="left:24px;top:694px;width:625px;height:1px;background:#8a8a8a;"></div>
<div style="left:24px;top:713px;width:625px;height:1px;background:#8a8a8a;"></div>
<div style="left:24px;top:732px;width:625px;height:1px;background:#8a8a8a;"></div>
<div style="left:24px;top:751px;width:625px;height:1px;background:#8a8a8a;"></div>
<div style="left:24px;top:770px;width:625px;height:1px;background:#8a8a8a;"></div>
<div style="left:24px;top:789px;width:625px;height:1px;background:#8a8a8a;"></div>
<div style="left:24px;top:808px;width:625px;height:1px;background:#8a8a8a;"></div>
<div style="left:99px;top:676px;width:1px;height:140px;background:#8a8a8a;"></div>
<div style="left:219px;top:676px;width:1px;height:140px;background:#8a8a8a;"></div>
<div style="left:339px;top:676px;width:1px;height:140px;background:#8a8a8a;"></div>
<div style="left:459px;top:676px;width:1px;height:140px;background:#8a8a8a;"></div>
<div style="left:579px;top:676px;width:1px;height:140px;background:#8a8a8a;"></div>
</body></html>
